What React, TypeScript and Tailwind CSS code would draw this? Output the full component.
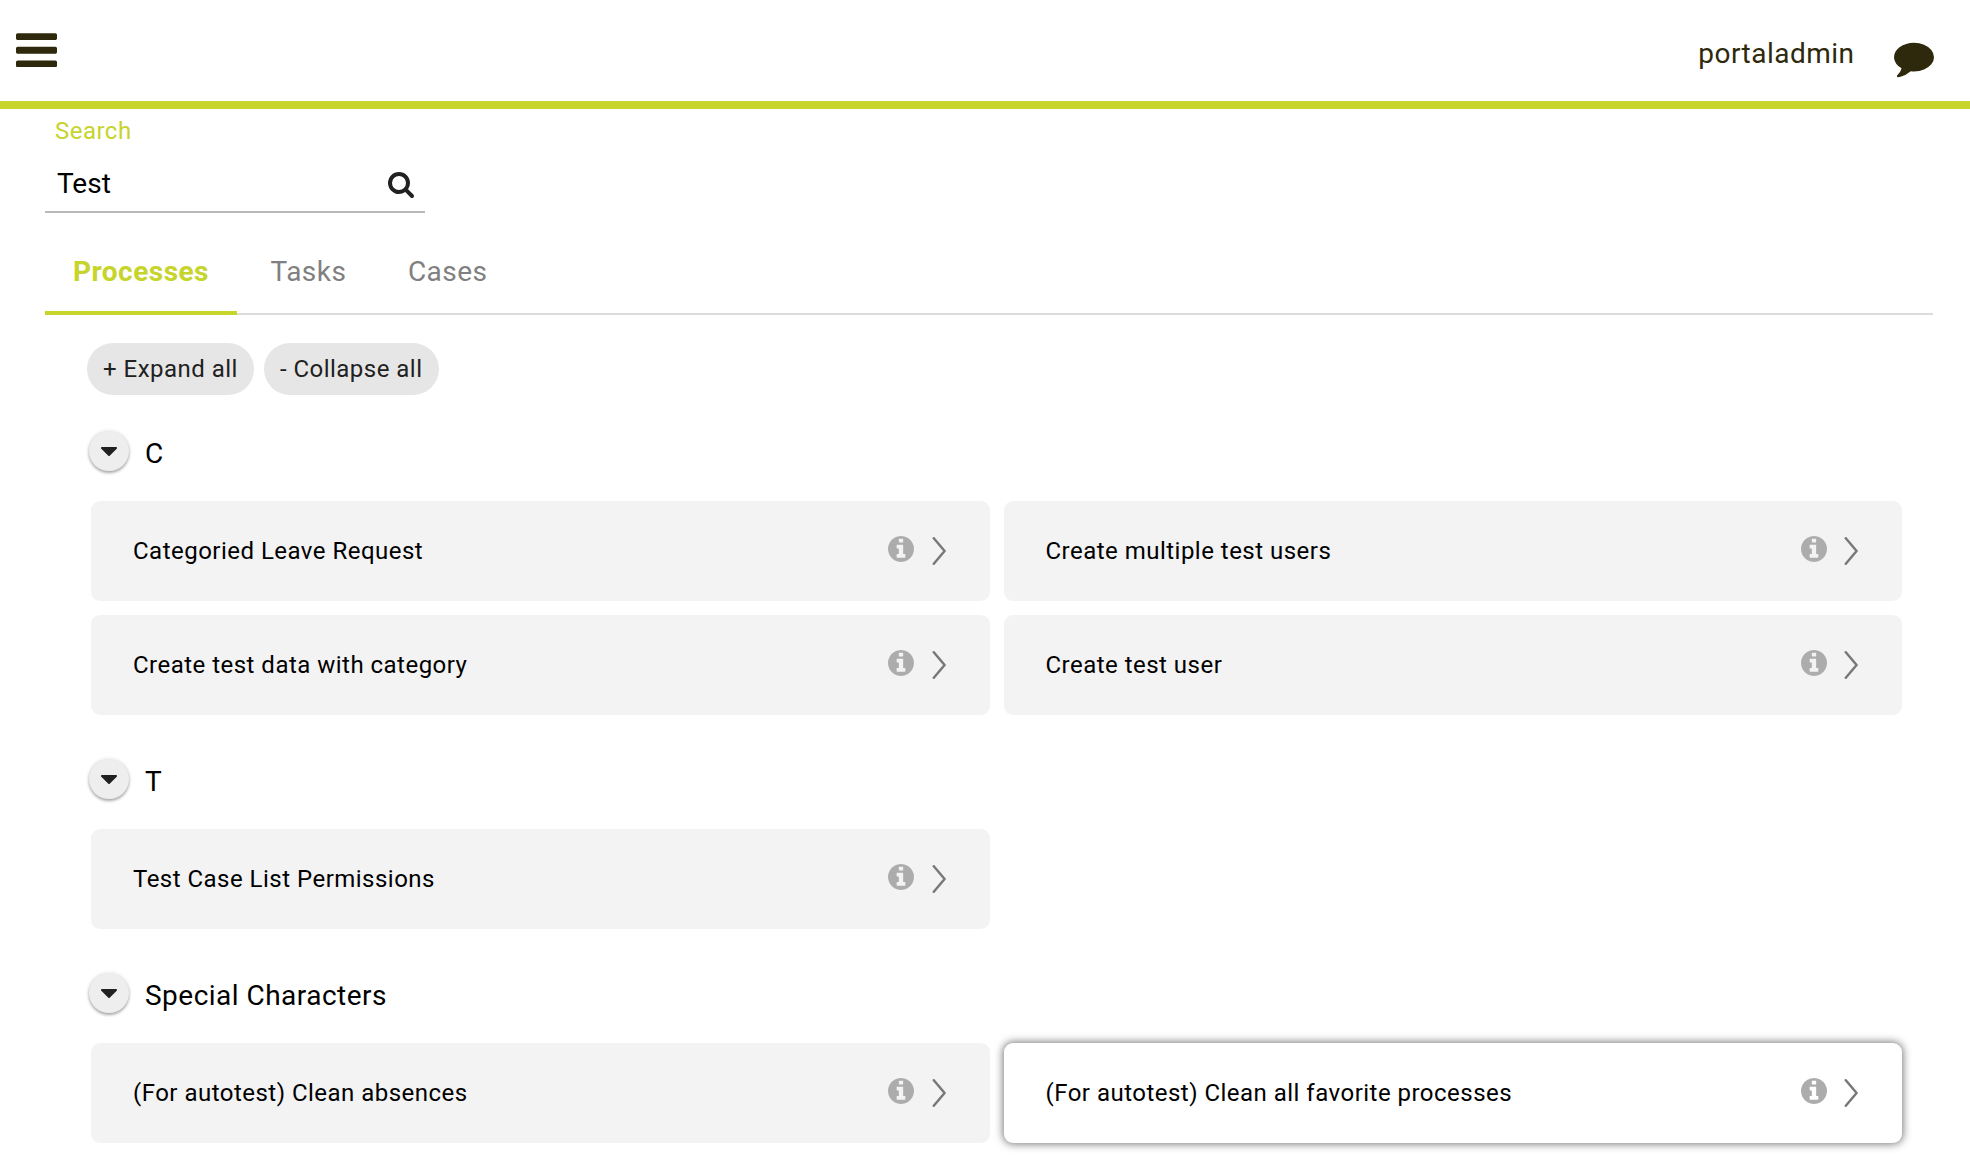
import React from "react";

function BarsIcon() {
  return (
    <svg viewBox="128 256 1536 1280" className="h-[34.5px] w-[41px]" fill="currentColor">
      <path d="M1664 1344v128q0 26-19 45t-45 19h-1408q-26 0-45-19t-19-45v-128q0-26 19-45t45-19h1408q26 0 45 19t19 45zm0-512v128q0 26-19 45t-45 19h-1408q-26 0-45-19t-19-45v-128q0-26 19-45t45-19h1408q26 0 45 19t19 45zm0-512v128q0 26-19 45t-45 19h-1408q-26 0-45-19t-19-45v-128q0-26 19-45t45-19h1408q26 0 45 19t19 45z" />
    </svg>
  );
}

function CommentIcon() {
  return (
    <svg viewBox="0 128 1792 1792" className="size-10" fill="currentColor">
      <path d="M1792 896q0 174-120 321.5t-326 233-450 85.5q-70 0-145-8-198 175-460 242-49 14-114 22-17 2-30.5-9t-17.5-29v-1q-3-4-.5-12t2-10 4.5-9.5l6-9 7-8.5 8-9q7-8 31-34.5t34.5-38 31-39.5 32.5-51 27-59 26-76q-157-89-247.5-220t-90.5-281q0-130 71-248.5t191-204.5 286-136.5 348-50.5q244 0 450 85.5t326 233 120 321.5z" />
    </svg>
  );
}

function SearchIcon() {
  return (
    <svg viewBox="64 128 1664 1664" className="size-[26px]" fill="currentColor">
      <path d="M1216 832q0-185-131.5-316.5t-316.5-131.5-316.5 131.5-131.5 316.5 131.5 316.5 316.5 131.5 316.5-131.5 131.5-316.5zm512 832q0 52-38 90t-90 38q-54 0-90-38l-343-342q-179 124-399 124-143 0-273.5-55.5t-225-150-150-225-55.5-273.5 55.5-273.5 150-225 225-150 273.5-55.5 273.5 55.5 225 150 150 225 55.5 273.5q0 220-124 399l343 343q37 37 37 90z" />
    </svg>
  );
}

function InfoIcon() {
  return (
    <svg viewBox="128 128 1536 1536" className="-mt-[3.5px] size-[26px] text-[#acacac]" fill="currentColor">
      <path d="M1152 1376v-160q0-14-9-23t-23-9h-96v-512q0-14-9-23t-23-9h-320q-14 0-23 9t-9 23v160q0 14 9 23t23 9h96v320h-96q-14 0-23 9t-9 23v160q0 14 9 23t23 9h448q14 0 23-9t9-23zm-128-896v-160q0-14-9-23t-23-9h-192q-14 0-23 9t-9 23v160q0 14 9 23t23 9h192q14 0 23-9t9-23zm640 416q0 209-103 385.5t-279.5 279.5-385.5 103-385.5-103-279.5-279.5-103-385.5 103-385.5 279.5-279.5 385.5-103 385.5 103 279.5 279.5 103 385.5z" />
    </svg>
  );
}

function ChevronIcon() {
  return (
    <svg viewBox="0 0 14 28" className="h-7 w-[14px] text-[#787878]" fill="none" stroke="currentColor" strokeWidth="2.5" strokeLinecap="round" strokeLinejoin="round">
      <path d="M1.8 1.3 12.6 14 1.8 26.7" />
    </svg>
  );
}

function CaretIcon() {
  return (
    <svg viewBox="384 640 1024 576" className="mt-px h-[9px] w-4" fill="currentColor">
      <path d="M1408 704q0 26-19 45l-448 448q-19 19-45 19t-45-19l-448-448q-19-19-19-45t19-45 45-19h896q26 0 45 19t19 45z" />
    </svg>
  );
}

type Item = { name: string; highlighted?: boolean };

function ProcessCard({ name, highlighted }: Item) {
  return (
    <div
      className={
        highlighted
          ? "flex h-[100px] items-center rounded-[9px] bg-white pr-[43.8px] pl-[42px] shadow-[0_0_8px_1px_#777777]"
          : "flex h-[100px] items-center rounded-[9px] bg-[#f3f3f3] pr-[43.8px] pl-[42px]"
      }
    >
      <span className="flex-1 text-2xl">{name}</span>
      <InfoIcon />
      <span className="ml-[17.5px]">
        <ChevronIcon />
      </span>
    </div>
  );
}

const groups: { title: string; items: Item[] }[] = [
  {
    title: "C",
    items: [
      { name: "Categoried Leave Request" },
      { name: "Create multiple test users" },
      { name: "Create test data with category" },
      { name: "Create test user" },
    ],
  },
  { title: "T", items: [{ name: "Test Case List Permissions" }] },
  {
    title: "Special Characters",
    items: [
      { name: "(For autotest) Clean absences" },
      { name: "(For autotest) Clean all favorite processes", highlighted: true },
    ],
  },
];

function Group({ title, items }: { title: string; items: Item[] }) {
  return (
    <section className="mb-11">
      <div className="flex h-10 items-center">
        <button className="ml-[-2px] flex size-10 items-center justify-center rounded-full bg-[#eeeeee] text-[#212121] shadow-[0_2px_3px_rgba(0,0,0,0.3),0_0_4px_rgba(0,0,0,0.12)]">
          <CaretIcon />
        </button>
        <h2 className="mt-1.5 ml-4 text-[28px] leading-9">{title}</h2>
      </div>
      <div className="mt-[30px] grid grid-cols-2 gap-[14px]">
        {items.map((item) => (
          <ProcessCard key={item.name} {...item} />
        ))}
      </div>
    </section>
  );
}

export default function App() {
  return (
    <div className="h-[1157px] overflow-hidden bg-white font-[Roboto,sans-serif] tracking-[0.48px] text-black">
      <header className="flex h-[109px] items-start justify-between border-b-8 border-[#c6d42b] pr-9 pl-4 text-[#2e290c]">
        <button className="mt-[32.5px]">
          <BarsIcon />
        </button>
        <div className="flex items-start">
          <span className="mt-9 text-[28px] leading-9">portaladmin</span>
          <span className="mt-[39.5px] ml-[39.5px]">
            <CommentIcon />
          </span>
        </div>
      </header>

      <main className="pr-[37px] pl-[45px]">
        <div className="w-[380px] border-b-2 border-[#b9b9b9]">
          <label className="ml-[10px] block pt-[7px] text-2xl leading-[30px] text-[#c6d42b]">Search</label>
          <div className="mt-[19px] flex h-[46px] items-start justify-between pr-[11px] pl-3">
            <span className="mt-px text-[28px] leading-9 tracking-normal">Test</span>
            <span className="mt-[7px] text-[#212121]">
              <SearchIcon />
            </span>
          </div>
        </div>

        <nav className="mt-[18px] flex h-[84px] items-end gap-[5.5px] text-[28px] leading-9 shadow-[inset_0_-2px_0_#dcdcdc]">
          <span className="h-[61px] border-b-4 border-[#c6d42b] px-7 font-bold text-[#c6d42b]">Processes</span>
          <span className="h-[61px] px-7 text-[#808080]">Tasks</span>
          <span className="h-[61px] px-7 text-[#808080]">Cases</span>
        </nav>

        <div className="pr-[31px] pl-[46px]">
          <div className="mt-7 mb-9 ml-[-4px] flex gap-[10px] text-2xl text-[#212121]">
            <button className="h-[52px] rounded-full bg-[#e6e6e6] px-4">+ Expand all</button>
            <button className="h-[52px] rounded-full bg-[#e6e6e6] px-4">- Collapse all</button>
          </div>
          {groups.map((g) => (
            <Group key={g.title} {...g} />
          ))}
        </div>
      </main>
    </div>
  );
}
